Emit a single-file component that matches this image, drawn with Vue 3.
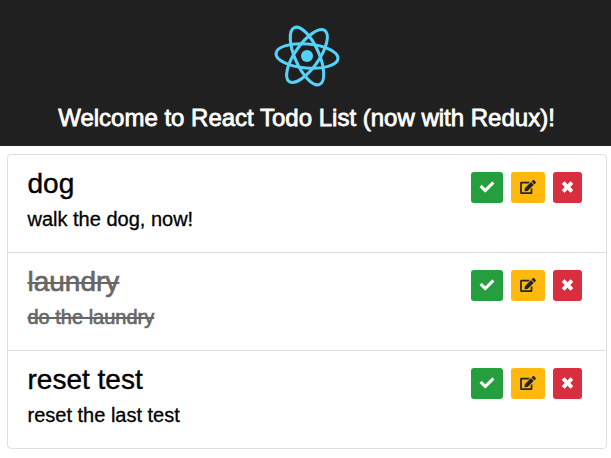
<script setup>
import { ref } from 'vue'

const todos = ref([
  { id: 1, title: 'dog', text: 'walk the dog, now!', done: false },
  { id: 2, title: 'laundry', text: 'do the laundry', done: true },
  { id: 3, title: 'reset test', text: 'reset the last test', done: false },
])

const toggle = (todo) => { todo.done = !todo.done }
const remove = (todo) => { todos.value = todos.value.filter((t) => t.id !== todo.id) }
</script>

<template>
  <div class="app">
    <header class="header">
      <svg class="logo" viewBox="-40 -40 80 80" aria-hidden="true">
        <circle r="6" fill="#53d2fb" />
        <g fill="none" stroke="#53d2fb" stroke-width="3.1">
          <ellipse rx="31.1" ry="12" transform="rotate(5)" />
          <ellipse rx="31.1" ry="12" transform="rotate(66)" />
          <ellipse rx="31.1" ry="12" transform="rotate(125)" />
        </g>
      </svg>
      <h1 class="title">Welcome to React Todo List (now with Redux)!</h1>
    </header>
    <ul class="list">
      <li v-for="todo in todos" :key="todo.id" class="item" :class="{ done: todo.done }">
        <div class="content">
          <h4 class="name">{{ todo.title }}</h4>
          <p class="text">{{ todo.text }}</p>
        </div>
        <div class="actions">
          <button class="btn success" aria-label="Done" @click="toggle(todo)">
            <svg class="check" viewBox="0 0 512 512"><path d="M173.900 439.400l-166.400-166.400c-10-10-10-26.200 0-36.200l36.200-36.200c10-10 26.200-10 36.200 0L192 312.700 432.100 72.600c10-10 26.200-10 36.200 0l36.200 36.200c10 10 10 26.200 0 36.200l-294.400 294.400c-10 10-26.200 10-36.200 0z" /></svg>
          </button>
          <button class="btn warning" aria-label="Edit">
            <svg class="edit" viewBox="0 0 576 512"><path d="M402.600 83.200l90.200 90.200c3.800 3.800 3.800 10 0 13.800L274.400 405.600l-92.800 10.300c-12.400 1.400-22.900-9.100-21.500-21.500l10.300-92.800L388.800 83.200c3.800-3.800 10-3.800 13.800 0zm162-22.900l-48.800-48.800c-15.200-15.200-39.900-15.200-55.200 0l-35.400 35.400c-3.800 3.800-3.800 10 0 13.800l90.200 90.200c3.800 3.800 10 3.800 13.800 0l35.400-35.400c15.200-15.300 15.200-40 0-55.200zM384 346.200V448H64V128h229.800c3.200 0 6.200-1.300 8.500-3.500l40-40c7.600-7.600 2.200-20.500-8.500-20.500H48C21.500 64 0 85.500 0 112v352c0 26.500 21.500 48 48 48h352c26.500 0 48-21.500 48-48V306.200c0-10.700-12.900-16-20.500-8.500l-40 40c-2.200 2.300-3.500 5.300-3.500 8.500z" /></svg>
          </button>
          <button class="btn danger" aria-label="Delete" @click="remove(todo)">
            <svg class="times" viewBox="0 0 384 512"><path d="M323.100 441l53.900-53.900c9.400-9.400 9.400-24.500 0-33.900L279.800 256l97.200-97.200c9.400-9.400 9.400-24.500 0-33.900L323.100 71c-9.400-9.400-24.500-9.400-33.900 0L192 168.200 94.800 71c-9.400-9.400-24.500-9.400-33.900 0L7 124.900c-9.400 9.400-9.400 24.500 0 33.900l97.200 97.200L7 353.200c-9.400 9.400-9.400 24.500 0 33.900L60.900 441c9.400 9.400 24.500 9.400 33.900 0l97.200-97.200 97.200 97.200c9.300 9.300 24.500 9.300 33.900 0z" /></svg>
          </button>
        </div>
      </li>
    </ul>
  </div>
</template>

<style>
body { background: #fff; }
</style>

<style scoped>
.app {
  font-family: "Liberation Sans", Arial, sans-serif;
  color: #000;
}
.header {
  box-sizing: border-box;
  height: 146px;
  padding: 16px 0 0 2px;
  display: flex;
  flex-direction: column;
  align-items: center;
  background: #202020;
  color: #fff;
}
.logo {
  display: block;
  flex: none;
  width: 80px;
  height: 80px;
}
.title {
  margin: 8px 0 0;
  font-size: 24px;
  line-height: 28px;
  font-weight: 400;
  white-space: nowrap;
  -webkit-text-stroke: 0.8px currentColor;
}
.list {
  list-style: none;
  margin: 8px 4px 0 7px;
  padding: 0;
  border: 1px solid #dfdfdf;
  border-radius: 4px;
}
.item {
  box-sizing: border-box;
  height: 97px;
  display: flex;
  justify-content: space-between;
  padding: 12px 24px 0 19.5px;
}
.item + .item {
  height: 98px;
  border-top: 1px solid #dfdfdf;
}
.name {
  margin: 0;
  font-size: 28px;
  line-height: 34px;
  font-weight: 400;
  -webkit-text-stroke: 0.4px currentColor;
}
.text {
  margin: 3px 0 0;
  font-size: 20px;
  line-height: 30px;
  -webkit-text-stroke: 0.3px currentColor;
}
.done .name,
.done .text {
  width: max-content;
  color: #666;
  text-decoration: line-through;
  text-decoration-thickness: 2px;
}
.done .name,
.done .text {
  -webkit-text-stroke-width: 0.6px;
}
.actions {
  display: flex;
  gap: 8px;
  padding-top: 5px;
}
.btn {
  box-sizing: border-box;
  display: flex;
  align-items: center;
  justify-content: center;
  height: 31px;
  padding: 0 0 1px;
  border: 0;
  border-radius: 3px;
  color: #fff;
}
.btn svg {
  display: block;
  height: 14px;
  fill: currentColor;
  overflow: visible;
}
.success { width: 32px; background: #259e3e; }
.warning { width: 34px; background: #ffb80e; color: #212529; }
.danger { width: 29px; background: #d82e3f; }
.check { width: 14px; stroke: currentColor; stroke-width: 14; }
.edit { width: 16px; }
.times { width: 11px; stroke: currentColor; stroke-width: 24; }
</style>
